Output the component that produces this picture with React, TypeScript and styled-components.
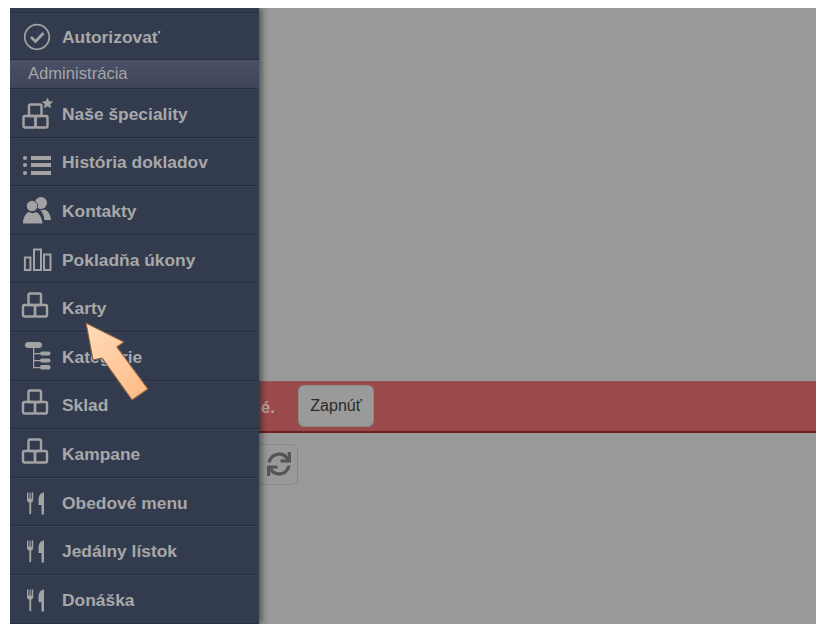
import React from 'react'
import styled, { createGlobalStyle } from 'styled-components'
import { FaSync } from 'react-icons/fa'

const GlobalStyle = createGlobalStyle`
  html, body {
    height: 100%;
    margin: 0;
    background: #fff;
  }
  body {
    font-family: "Liberation Sans", Arial, sans-serif;
  }
`

function CubesIcon({ star }: { star?: boolean }) {
  return (
    <IconSvg width="30" height="32" viewBox="0 0 30 32" fill="none" stroke="#a3a3a3" strokeWidth="2.4">
      <g transform={star ? 'translate(0.5 5)' : undefined}>
        <rect x="7.500" y="2.500" width="12.500" height="11.500" rx="1.500" />
        <rect x="2" y="14" width="12" height="11.500" rx="1.500" />
        <rect x="14" y="14" width="12" height="11.500" rx="1.500" />
      </g>
      {star && (
        <path
          d="M26.500 0.500l1.700 3.700 4 .4-3 2.700.9 4-3.600-2.100-3.600 2.100.9-4-3-2.700 4-.4z"
          fill="#a3a3a3"
          stroke="none"
        />
      )}
    </IconSvg>
  )
}

function CheckIcon() {
  return (
    <IconSvg width="30" height="30" viewBox="0 0 30 30" fill="none" stroke="#a3a3a3">
      <circle cx="16" cy="16" r="12.300" strokeWidth="1.700" />
      <path d="M10 16l4.500 4.500L22.500 12" strokeWidth="2.700" />
    </IconSvg>
  )
}

function ListIcon() {
  return (
    <IconSvg width="30" height="30" viewBox="0 0 30 30" fill="#a3a3a3">
      <circle cx="4" cy="12" r="2" />
      <circle cx="4" cy="19" r="2" />
      <circle cx="4" cy="27" r="2" />
      <rect x="10" y="10" width="20" height="4" />
      <rect x="10" y="17" width="20" height="4" />
      <rect x="10" y="25" width="20" height="4" />
    </IconSvg>
  )
}

function PeopleIcon() {
  return (
    <IconSvg width="30" height="28" viewBox="0 0 30 28" fill="#a3a3a3">
      <circle cx="20" cy="7" r="6" />
      <path d="M19 13.500c2 1 3 1 4.500 0 3 1 6 4 6.500 10.500h-6.500c-.5-4-2-8-4.500-10.500z" />
      <circle cx="11" cy="10" r="5.600" stroke="#343b4f" strokeWidth=".8" />
      <path d="M2 27.500c0-6 3-10.500 6-11.500 2 1.500 5 1.500 7 0 3 1 6 5.500 6.500 11.500z" />
    </IconSvg>
  )
}

function BarsIcon() {
  return (
    <IconSvg width="30" height="24" viewBox="0 0 30 24" fill="none" stroke="#a3a3a3" strokeWidth="2">
      <rect x="3.900" y="10.500" width="5.500" height="12.500" />
      <rect x="13" y="2.500" width="7" height="20.500" />
      <rect x="23" y="7.500" width="6.500" height="15.500" />
    </IconSvg>
  )
}

function TreeIcon() {
  return (
    <IconSvg width="30" height="30" viewBox="0 0 30 30" fill="#a3a3a3">
      <rect x="4" y="1" width="17" height="6" rx="3" />
      <path d="M12 7h1.300v19H20v1.300h-8zM13 12h7v1.300h-7zM13 19h7v1.300h-7z" />
      <rect x="19" y="10.500" width="10.500" height="4" rx="2" />
      <rect x="19" y="17.500" width="10.500" height="4" rx="2" />
      <rect x="19" y="24" width="10.500" height="4.500" rx="2" />
    </IconSvg>
  )
}

function CutleryIcon() {
  return (
    <IconSvg width="30" height="24" viewBox="0 0 30 24" fill="#a3a3a3">
      <path d="M6 2.500h1.400v6h1.100v-6h1.200v6h1.100v-6H12.200v7.500c0 1.500-1 2.300-2 2.600V24H8.300V12.600C7 12.300 6 11.500 6 10z" />
      <path d="M17.500 11c0-5 2-8.500 5.500-8.500V24.500h-2.500V15h-3z" />
    </IconSvg>
  )
}

const items = [
  { label: 'Naše špeciality', icon: <CubesIcon star /> },
  { label: 'História dokladov', icon: <ListIcon /> },
  { label: 'Kontakty', icon: <PeopleIcon /> },
  { label: 'Pokladňa úkony', icon: <BarsIcon /> },
  { label: 'Karty', icon: <CubesIcon /> },
  { label: 'Kategórie', icon: <TreeIcon /> },
  { label: 'Sklad', icon: <CubesIcon /> },
  { label: 'Kampane', icon: <CubesIcon /> },
  { label: 'Obedové menu', icon: <CutleryIcon /> },
  { label: 'Jedálny lístok', icon: <CutleryIcon /> },
  { label: 'Donáška', icon: <CutleryIcon /> },
]

export default function App() {
  return (
    <>
      <GlobalStyle />
      <Page>
        <Content>
          <Banner>
            <BannerText>é.</BannerText>
            <BannerButton>Zapnúť</BannerButton>
          </Banner>
          <Tools>
            <RefreshButton>
              <FaSync size={24} />
            </RefreshButton>
          </Tools>
        </Content>
        <Drawer>
          <TopStrip />
          <AuthRow>
            <IconSlot>
              <CheckIcon />
            </IconSlot>
            <RowLabel>Autorizovať</RowLabel>
          </AuthRow>
          <SectionTitle>Administrácia</SectionTitle>
          {items.map((item) => {
            return (
              <MenuRow key={item.label}>
                <IconSlot>{item.icon}</IconSlot>
                <RowLabel>{item.label}</RowLabel>
              </MenuRow>
            )
          })}
        </Drawer>
        <Pointer width="70" height="84" viewBox="0 0 70 84">
          <defs>
            <linearGradient id="pointerFill" x1="0" y1="0" x2="1" y2="1">
              <stop offset="0" stopColor="#ffdcbc" />
              <stop offset="1" stopColor="#ffb983" />
            </linearGradient>
          </defs>
          <path
            d="M1 1L39 20L32 25L63 67L47 78L17 36L8 38Z"
            fill="url(#pointerFill)"
            stroke="#8a5f3c"
            strokeWidth="1.200"
            strokeLinejoin="round"
          />
        </Pointer>
      </Page>
    </>
  )
}

const Page = styled.div`
  position: relative;
  height: 616px;
  margin: 8px 13px 0 10px;
  background: #999999;
  overflow: hidden;
`

const Content = styled.main`
  display: flex;
  flex-direction: column;
  padding-top: 373px;
`

const Banner = styled.section`
  display: grid;
  grid-template-columns: 265px auto;
  justify-content: start;
  align-items: start;
  column-gap: 23px;
  height: 52px;
  padding-top: 3px;
  box-sizing: border-box;
  background: #9b4a4c;
  border-top: 1px solid #93565a;
  border-bottom: 2px solid #6e1f22;
`

const BannerText = styled.span`
  align-self: center;
  font-size: 17px;
  font-weight: 700;
  color: #b9a2a2;
  text-align: right;
  white-space: nowrap;
`

const BannerButton = styled.button`
  width: 76px;
  height: 42px;
  padding: 0;
  font-family: inherit;
  font-size: 16px;
  color: #2a2a2a;
  background: #9a9a9a;
  border: 1px solid #8a8a8a;
  border-radius: 6px;
`

const Tools = styled.div`
  display: flex;
  justify-content: flex-start;
  padding: 11px 0 0 230px;
`

const RefreshButton = styled.button`
  display: flex;
  align-items: center;
  justify-content: center;
  width: 58px;
  height: 41px;
  padding: 0 0 1px 20px;
  color: #555555;
  background: #999999;
  border: 1px solid #888888;
  border-radius: 6px;
`

const Drawer = styled.nav`
  position: absolute;
  top: 0;
  left: 0;
  bottom: 0;
  width: 249px;
  display: flex;
  flex-direction: column;
  background: #333b4f;
  box-shadow: 3px 0 6px rgba(0, 0, 0, 0.45);
`

const TopStrip = styled.div`
  height: 4px;
  flex: none;
  border-bottom: 1px solid #272d3e;
`

const MenuRow = styled.a`
  display: flex;
  align-items: center;
  flex: none;
  height: 48.6px;
  box-sizing: border-box;
  font-size: 17.4px;
  font-weight: 700;
  color: #a8a8a8;
  border-bottom: 1px solid #272d3e;
  box-shadow: inset 0 1px 0 #3c4358;
`

const AuthRow = styled(MenuRow)`
  height: 47px;
`

const RowLabel = styled.span`
  margin-top: 3px;
`

const IconSlot = styled.span`
  display: flex;
  align-items: center;
  justify-content: center;
  width: 52px;
`

const IconSvg = styled.svg`
  overflow: visible;
`

const SectionTitle = styled.div`
  display: flex;
  align-items: center;
  flex: none;
  height: 29px;
  box-sizing: border-box;
  padding-left: 18px;
  font-size: 16.6px;
  color: #a6a6a6;
  background: linear-gradient(#4a5066, #3e4459);
  border-bottom: 1px solid #272d3e;
`

const Pointer = styled.svg`
  position: absolute;
  top: 314px;
  left: 75px;
`
